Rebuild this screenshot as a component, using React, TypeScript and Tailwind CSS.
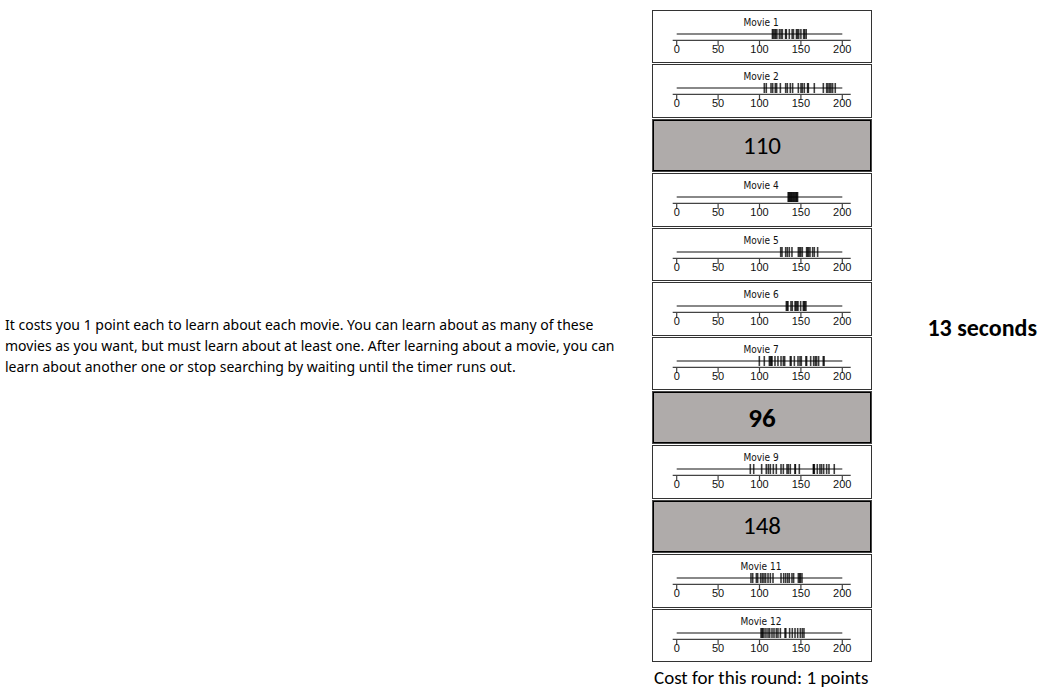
type Movie = { id: number; revealed?: string; bold?: boolean; samples?: number[] };

const movies: Movie[] = [
  { id: 1, samples: [115.6, 116.6, 118.4, 119.5, 121, 124, 126, 127.6, 131.5, 132.4, 136, 139.4, 141, 144.6, 145.8, 147.4, 150, 153.3, 154.6, 156.4] },
  { id: 2, samples: [105.8, 108.2, 113.9, 115.9, 119.1, 120.7, 125.2, 131.6, 133.6, 137.2, 140, 146.9, 150.1, 151.7, 154.1, 158.1, 159, 166.2, 177.1, 181.1, 182.7, 184.7, 186.3, 188.3, 191.5] },
  { id: 3, revealed: '110' },
  { id: 4, samples: [134.6, 135.5, 136.4, 137.3, 138.2, 139.1, 140.2, 141.3, 142.2, 143.4, 144.3, 145.2, 146] },
  { id: 5, samples: [125.6, 127.2, 131.6, 133.6, 136, 139.2, 146.9, 148.4, 149.9, 151.7, 156.9, 158, 159.4, 161, 164.2, 166.2, 170.2] },
  { id: 6, samples: [132.4, 133.4, 134.4, 138, 139.6, 142.9, 144, 145.3, 146.5, 149.7, 152.9, 153.9, 154.9, 156.1] },
  { id: 7, samples: [99.8, 105.8, 111.9, 113.1, 114.3, 115.1, 118.7, 122.3, 126, 128.8, 130.4, 137.2, 138.2, 142.1, 146.5, 148.9, 150.5, 156.1, 156.9, 161.8, 165.4, 167.4, 169, 171.4, 177, 178] },
  { id: 8, revealed: '96', bold: true },
  { id: 9, samples: [88.9, 93, 102.6, 108.2, 110.7, 113.1, 116.7, 120.3, 126, 128.8, 133.2, 134.8, 137.2, 142.9, 143.3, 148.1, 165, 165.6, 166.2, 169.8, 173, 175, 177.5, 181.1, 183.9, 190.3] },
  { id: 10, revealed: '148' },
  { id: 11, samples: [89.7, 91.8, 96.2, 97.8, 101.4, 103.4, 105.4, 107.4, 110.3, 113.1, 116.3, 126, 129.2, 131.6, 134, 136, 139.2, 141.2, 146.9, 148.5, 149.4, 151.3] },
  { id: 12, samples: [101.8, 103, 103.8, 105.4, 107.8, 110.3, 112.3, 115.1, 117.5, 120.3, 122.3, 125.2, 130.8, 131.8, 136.4, 139.6, 142.9, 146.1, 149.3, 151.7, 153.7] },
];

const axisTicks = [0, 50, 100, 150, 200];
const toX = (value: number) => 23.7 + value * 0.828;

function StripPlot({ id, samples }: { id: number; samples: number[] }) {
  return (
    <svg viewBox="0 0 218 50" className="block h-[50px] w-[218px]" role="img" aria-label={`Movie ${id}`}>
      <text
        x="108"
        y="15"
        textAnchor="middle"
        className="fill-[#111111] font-['DejaVu_Sans_Condensed','DejaVu_Sans',sans-serif] text-[10px]"
      >
        Movie {id}
      </text>
      <line x1={toX(0)} x2={toX(200)} y1="23" y2="23" stroke="#606060" strokeWidth="1.3" />
      {samples.map((value) => (
        <line key={value} x1={toX(value)} x2={toX(value)} y1="18" y2="28" stroke="#000000" strokeOpacity="0.76" strokeWidth="1.6" />
      ))}
      <line x1="19.7" x2="197.7" y1="29.4" y2="29.4" stroke="#444444" strokeWidth="1.2" />
      {axisTicks.map((tick) => (
        <g key={tick}>
          <line x1={toX(tick)} x2={toX(tick)} y1="30" y2="35" stroke="#444444" strokeWidth="1.2" />
          <text
            x={toX(tick)}
            y="42"
            textAnchor="middle"
            className="fill-[#111111] font-['Liberation_Sans',sans-serif] text-[11px]"
          >
            {tick}
          </text>
        </g>
      ))}
    </svg>
  );
}

function MovieCard({ movie }: { movie: Movie }) {
  if (movie.revealed) {
    return (
      <button
        type="button"
        className={`flex w-full items-center justify-center border border-[#444444] bg-[#afabaa] leading-6 inset-ring inset-ring-black ${movie.bold ? 'text-[27px] font-bold' : 'text-[25px]'}`}
      >
        {movie.revealed}
      </button>
    );
  }
  return (
    <button type="button" className="flex w-full items-start justify-center overflow-hidden border border-[#333333] bg-white">
      <StripPlot id={movie.id} samples={movie.samples ?? []} />
    </button>
  );
}

export default function App() {
  return (
    <main className="flex min-h-screen bg-white font-[Carlito,Lato,sans-serif] text-black">
      <section className="flex flex-1 items-center pt-0.5 pr-7 pl-[5px]">
        <p className="font-['Noto_Sans',sans-serif] text-[14px] leading-[21px]">
          It costs you 1 point each to learn about each movie. You can learn about as many of these movies as you want, but must learn about at least one. After learning about a movie, you can learn about another one or stop searching by waiting until the timer runs out.
        </p>
      </section>
      <section className="flex w-[220px] flex-col pt-[10px]">
        <div className="grid flex-1 auto-rows-fr gap-px">
          {movies.map((movie) => (
            <MovieCard key={movie.id} movie={movie} />
          ))}
        </div>
        <p className="pt-1.5 pl-0.5 text-[19px] leading-5 whitespace-nowrap">Cost for this round: 1 points</p>
      </section>
      <aside className="flex w-[167px] items-center justify-end pr-0.5 pb-8">
        <p className="text-[24px] leading-6 font-bold">13 seconds</p>
      </aside>
    </main>
  );
}
